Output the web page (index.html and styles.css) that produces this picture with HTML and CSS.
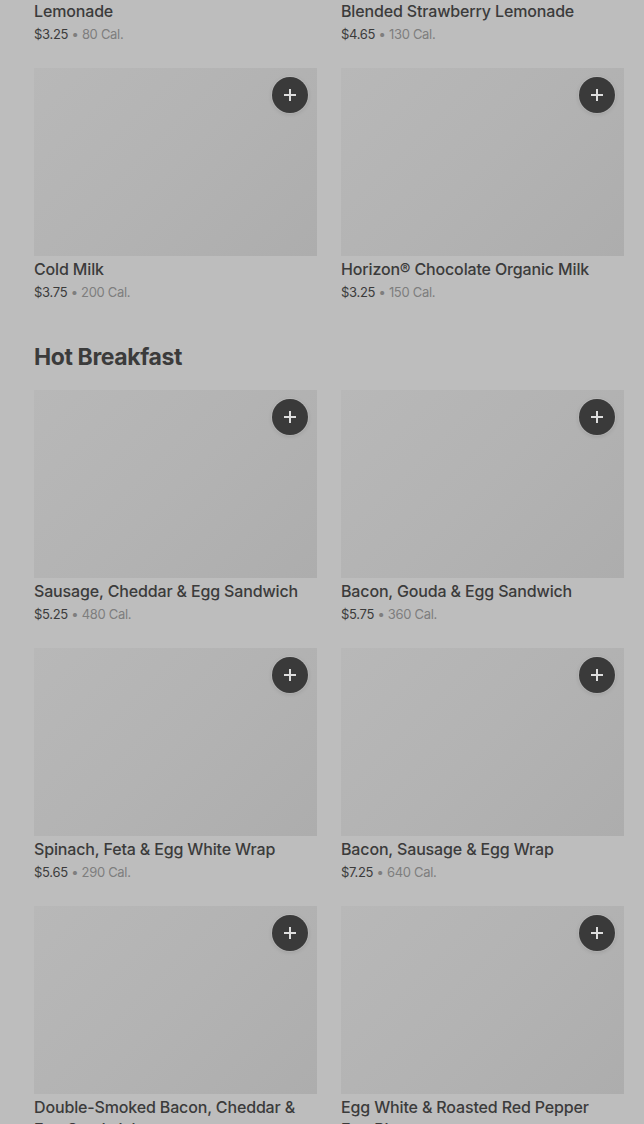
FILE: index.html
```html
<!DOCTYPE html>
<html lang="en">
<head>
  <meta charset="UTF-8">
  <title>Menu</title>
  <link rel="stylesheet" href="styles.css">
</head>
<body>
  <div class="menu">

    <div class="grid first">
      <div class="item">
        <div class="photo"><button class="add"><svg viewBox="0 0 12 12"><path d="M6 0v12M0 6h12"/></svg></button></div>
        <div class="name">Lemonade</div>
        <div class="meta"><span class="price">$3.25</span> • 80 Cal.</div>
      </div>
      <div class="item">
        <div class="photo"><button class="add"><svg viewBox="0 0 12 12"><path d="M6 0v12M0 6h12"/></svg></button></div>
        <div class="name">Blended Strawberry Lemonade</div>
        <div class="meta"><span class="price">$4.65</span> • 130 Cal.</div>
      </div>
      <div class="item">
        <div class="photo"><button class="add"><svg viewBox="0 0 12 12"><path d="M6 0v12M0 6h12"/></svg></button></div>
        <div class="name">Cold Milk</div>
        <div class="meta"><span class="price">$3.75</span> • 200 Cal.</div>
      </div>
      <div class="item">
        <div class="photo"><button class="add"><svg viewBox="0 0 12 12"><path d="M6 0v12M0 6h12"/></svg></button></div>
        <div class="name">Horizon® Chocolate Organic Milk</div>
        <div class="meta"><span class="price">$3.25</span> • 150 Cal.</div>
      </div>
    </div>

    <section class="category">
      <h2>Hot Breakfast</h2>
      <div class="grid">
        <div class="item">
          <div class="photo"><button class="add"><svg viewBox="0 0 12 12"><path d="M6 0v12M0 6h12"/></svg></button></div>
          <div class="name">Sausage, Cheddar &amp; Egg Sandwich</div>
          <div class="meta"><span class="price">$5.25</span> • 480 Cal.</div>
        </div>
        <div class="item">
          <div class="photo"><button class="add"><svg viewBox="0 0 12 12"><path d="M6 0v12M0 6h12"/></svg></button></div>
          <div class="name">Bacon, Gouda &amp; Egg Sandwich</div>
          <div class="meta"><span class="price">$5.75</span> • 360 Cal.</div>
        </div>
        <div class="item">
          <div class="photo"><button class="add"><svg viewBox="0 0 12 12"><path d="M6 0v12M0 6h12"/></svg></button></div>
          <div class="name">Spinach, Feta &amp; Egg White Wrap</div>
          <div class="meta"><span class="price">$5.65</span> • 290 Cal.</div>
        </div>
        <div class="item">
          <div class="photo"><button class="add"><svg viewBox="0 0 12 12"><path d="M6 0v12M0 6h12"/></svg></button></div>
          <div class="name">Bacon, Sausage &amp; Egg Wrap</div>
          <div class="meta"><span class="price">$7.25</span> • 640 Cal.</div>
        </div>
        <div class="item">
          <div class="photo"><button class="add"><svg viewBox="0 0 12 12"><path d="M6 0v12M0 6h12"/></svg></button></div>
          <div class="name">Double-Smoked Bacon, Cheddar &amp; Egg Sandwich</div>
          <div class="meta"><span class="price">$6.45</span> • 500 Cal.</div>
        </div>
        <div class="item">
          <div class="photo"><button class="add"><svg viewBox="0 0 12 12"><path d="M6 0v12M0 6h12"/></svg></button></div>
          <div class="name">Egg White &amp; Roasted Red Pepper Egg Bites</div>
          <div class="meta"><span class="price">$5.45</span> • 170 Cal.</div>
        </div>
      </div>
    </section>

  </div>
</body>
</html>
```

FILE: styles.css
```css
body {
  margin: 0;
  background-color: #bdbdbd;
  font-family: Inter, "Noto Sans", sans-serif;
  color: #3b3b3b;
  overflow: hidden;
}

.menu {
  padding: 0 20px 0 34px;
}

.grid {
  display: grid;
  grid-template-columns: 1fr 1fr;
  column-gap: 24px;
  row-gap: 24px;
}

.grid.first {
  margin-top: -190px;
}

.photo {
  position: relative;
  height: 188px;
  background: linear-gradient(135deg, #b8b8b8 0%, #b3b3b3 50%, #adadad 100%);
}

.add {
  position: absolute;
  top: 9px;
  right: 9px;
  width: 36px;
  height: 36px;
  border: none;
  border-radius: 50%;
  background-color: #3a3a3a;
  padding: 0;
  display: flex;
  align-items: center;
  justify-content: center;
  box-shadow: 0 0 0 1px rgba(255,255,255,0.15), 0 1px 4px rgba(0,0,0,0.15);
}

.add svg {
  width: 12px;
  height: 12px;
  stroke: #dedede;
  stroke-width: 2;
  fill: none;
}

.name {
  margin-top: 2px;
  padding-right: 10px;
  font-size: 16px;
  font-weight: 500;
  line-height: 22px;
  letter-spacing: -0.15px;
  color: #3b3b3b;
}

.meta {
  margin-top: 2px;
  font-size: 13px;
  line-height: 20px;
  letter-spacing: -0.3px;
  color: #7e7e7e;
}

.price {
  color: #3b3b3b;
}

.category {
  margin-top: 40px;
}

.category h2 {
  margin: 0 0 18px 0;
  font-size: 23px;
  line-height: 30px;
  font-weight: 700;
  letter-spacing: -0.4px;
  color: #3b3b3b;
}
```
